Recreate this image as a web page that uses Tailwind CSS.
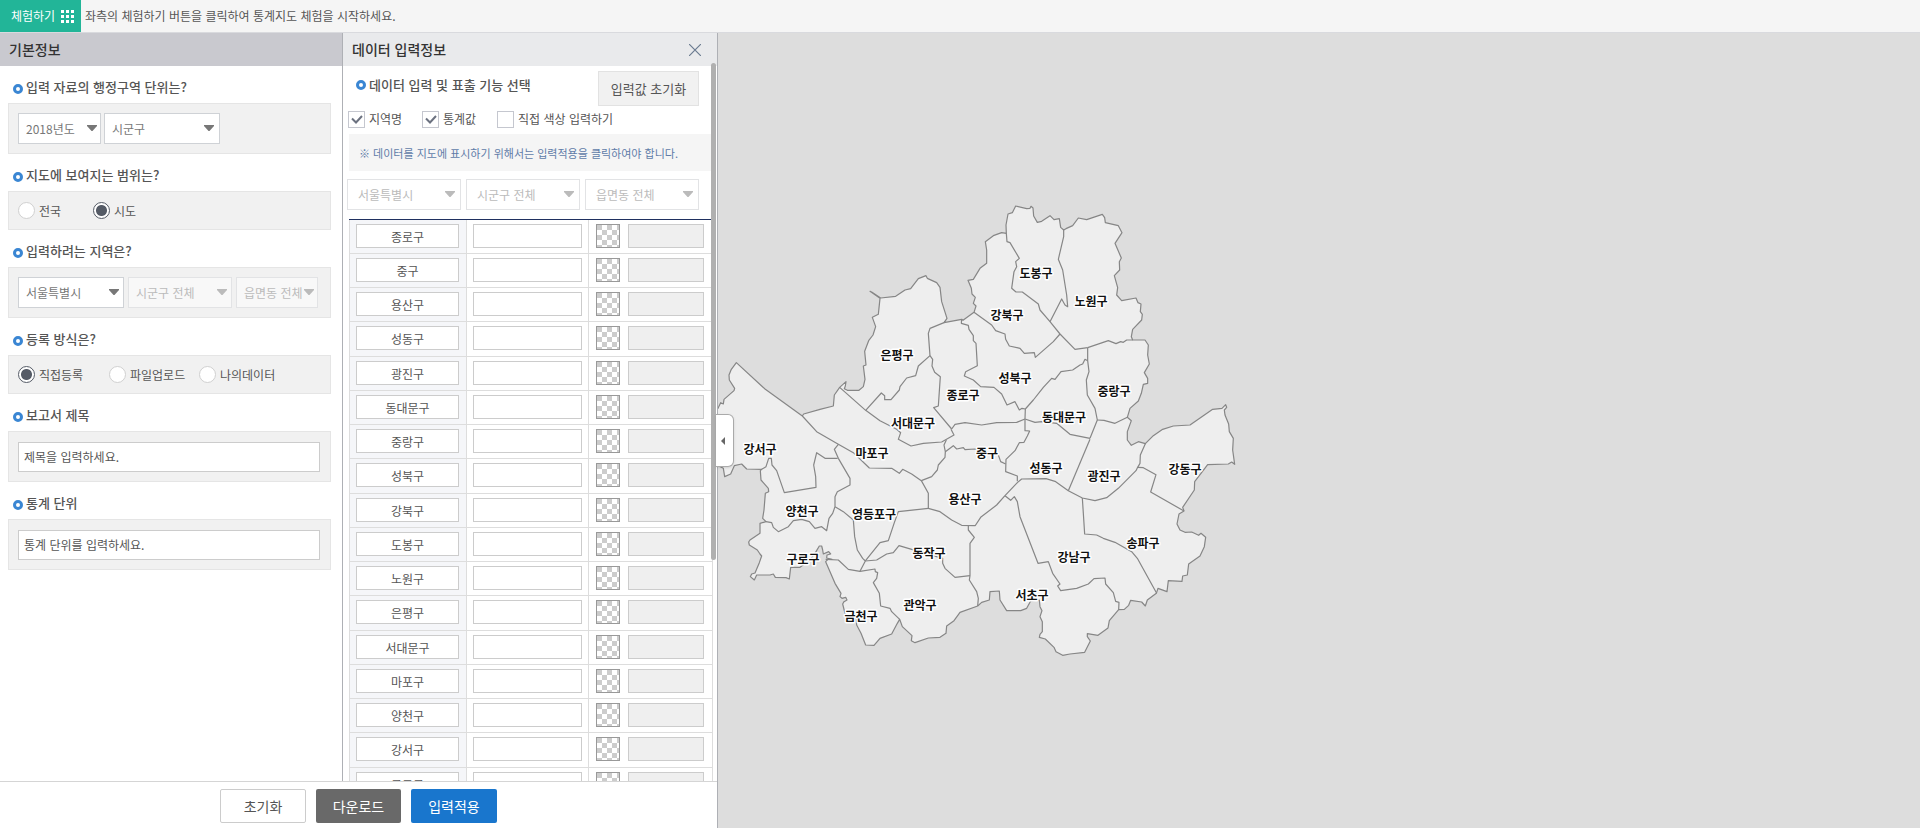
<!DOCTYPE html>
<html lang="ko">
<head>
    <meta charset="UTF-8">
    <meta name="viewport" content="width=device-width, initial-scale=1.0">
    <title>통계지도 체험</title>
    <script src="https://cdn.jsdelivr.net/npm/@tailwindcss/browser@4"></script>
    <style>
        body, input, select, button { font-family: 'Noto Sans CJK KR', 'Liberation Sans', sans-serif; }
    </style>
</head>
<body class="flex h-screen flex-col overflow-hidden bg-white text-xs text-[#555]">

    <!-- 아이콘 -->
    <svg class="hidden">
        <symbol id="bullet" viewBox="0 0 10 10"><circle cx="5" cy="5" r="3.5" fill="#fff" stroke="#3a86d3" stroke-width="3"/></symbol>
        <symbol id="caret" viewBox="0 0 10 6"><path d="M0 0h10v1L5.5 6h-1L0 1z" fill="currentColor"/></symbol>
    </svg>

    <header class="flex h-[33px] shrink-0 items-stretch border-b border-[#d9dade] bg-[#f5f5f5]">
        <button type="button" class="flex w-[81px] items-center justify-between bg-[#22b598] pr-[7px] pl-[11px] text-white">
            체험하기
            <svg class="size-[13px]" viewBox="0 0 13 13" fill="#fff"><path d="M0 0h3v3H0zM5 0h3v3H5zM10 0h3v3h-3zM0 5h3v3H0zM5 5h3v3H5zM10 5h3v3h-3zM0 10h3v3H0zM5 10h3v3H5zM10 10h3v3h-3z"/></svg>
        </button>
        <p class="pl-1 leading-8">좌측의 체험하기 버튼을 클릭하여 통계지도 체험을 시작하세요.</p>
    </header>

    <main class="flex min-h-0 flex-1">
        <div class="flex w-[718px] shrink-0 flex-col border-r border-[#aeb0b5]">
            <div class="flex min-h-0 flex-1">

                <!-- 기본정보 -->
                <section class="w-[343px] shrink-0 border-r border-[#aeb0b5]">
                    <h2 class="h-[33px] bg-[#c9c9cf] pl-[9px] text-sm leading-8 font-medium text-[#333]">기본정보</h2>
                    <form class="pr-[11px] pl-2">
                        <h3 class="flex h-[37px] items-end gap-[3px] pb-[6px] pl-[5px] text-[13px] leading-5 font-medium"><svg class="mb-[3px] size-[10px]"><use href="#bullet"/></svg>입력 자료의 행정구역 단위는?</h3>
                        <div class="flex h-[51px] items-center gap-[3px] border border-[#e5e5e5] bg-[#f1f1f1] px-[9px]">
                            <div class="relative w-[83px] text-[#777]">
                                <select aria-label="연도" class="h-[31px] w-full appearance-none border border-[#cfd2d6] bg-white pl-[7px]"><option>2018년도</option></select>
                                <svg class="pointer-events-none absolute top-3 right-1 h-[6px] w-[10px]"><use href="#caret"/></svg>
                            </div>
                            <div class="relative w-[116px] text-[#777]">
                                <select aria-label="행정구역 단위" class="h-[31px] w-full appearance-none border border-[#cfd2d6] bg-white pl-[7px]"><option>시군구</option></select>
                                <svg class="pointer-events-none absolute top-3 right-[6px] h-[6px] w-[10px]"><use href="#caret"/></svg>
                            </div>
                        </div>

                        <h3 class="flex h-[37px] items-end gap-[3px] pb-[6px] pl-[5px] text-[13px] leading-5 font-medium"><svg class="mb-[3px] size-[10px]"><use href="#bullet"/></svg>지도에 보여지는 범위는?</h3>
                        <div class="flex h-[39px] items-center border border-[#e5e5e5] bg-[#f1f1f1] px-[9px]">
                            <label class="flex w-[75px] items-center gap-1"><input type="radio" name="range" class="size-[17px] appearance-none rounded-full border border-[#d0d0d0] bg-white checked:border-[#555b66] checked:bg-[radial-gradient(circle,#555b66_5px,#fff_6px)]">전국</label>
                            <label class="flex items-center gap-1"><input type="radio" name="range" checked class="size-[17px] appearance-none rounded-full border border-[#d0d0d0] bg-white checked:border-[#555b66] checked:bg-[radial-gradient(circle,#555b66_5px,#fff_6px)]">시도</label>
                        </div>

                        <h3 class="flex h-[37px] items-end gap-[3px] pb-[6px] pl-[5px] text-[13px] leading-5 font-medium"><svg class="mb-[3px] size-[10px]"><use href="#bullet"/></svg>입력하려는 지역은?</h3>
                        <div class="flex h-[51px] items-center gap-1 border border-[#e5e5e5] bg-[#f1f1f1] px-[9px]">
                            <div class="relative w-[106px] text-[#777]">
                                <select aria-label="시도" class="h-[31px] w-full appearance-none border border-[#cfd2d6] bg-white pl-[7px]"><option>서울특별시</option></select>
                                <svg class="pointer-events-none absolute top-3 right-[5px] h-[6px] w-[10px]"><use href="#caret"/></svg>
                            </div>
                            <div class="relative w-[104px] text-[#bbb]">
                                <select aria-label="시군구" disabled class="h-[31px] w-full appearance-none border border-[#e2e3e5] bg-[#f8f8f8] pl-[7px]"><option>시군구 전체</option></select>
                                <svg class="pointer-events-none absolute top-3 right-[5px] h-[6px] w-[10px]"><use href="#caret"/></svg>
                            </div>
                            <div class="relative w-[82px] text-[#bbb]">
                                <select aria-label="읍면동" disabled class="h-[31px] w-full appearance-none border border-[#e2e3e5] bg-[#f8f8f8] pl-[7px]"><option>읍면동 전체</option></select>
                                <svg class="pointer-events-none absolute top-3 right-1 h-[6px] w-[10px]"><use href="#caret"/></svg>
                            </div>
                        </div>

                        <h3 class="flex h-[37px] items-end gap-[3px] pb-[6px] pl-[5px] text-[13px] leading-5 font-medium"><svg class="mb-[3px] size-[10px]"><use href="#bullet"/></svg>등록 방식은?</h3>
                        <div class="flex h-[39px] items-center border border-[#e5e5e5] bg-[#f1f1f1] px-[9px]">
                            <label class="flex w-[91px] items-center gap-1"><input type="radio" name="method" checked class="size-[17px] appearance-none rounded-full border border-[#d0d0d0] bg-white checked:border-[#555b66] checked:bg-[radial-gradient(circle,#555b66_5px,#fff_6px)]">직접등록</label>
                            <label class="flex w-[90px] items-center gap-1"><input type="radio" name="method" class="size-[17px] appearance-none rounded-full border border-[#d0d0d0] bg-white checked:border-[#555b66] checked:bg-[radial-gradient(circle,#555b66_5px,#fff_6px)]">파일업로드</label>
                            <label class="flex items-center gap-1"><input type="radio" name="method" class="size-[17px] appearance-none rounded-full border border-[#d0d0d0] bg-white checked:border-[#555b66] checked:bg-[radial-gradient(circle,#555b66_5px,#fff_6px)]">나의데이터</label>
                        </div>

                        <label for="report-title" class="flex h-[37px] items-end gap-[3px] pb-[6px] pl-[5px] text-[13px] leading-5 font-medium"><svg class="mb-[3px] size-[10px]"><use href="#bullet"/></svg>보고서 제목</label>
                        <div class="flex h-[51px] items-center border border-[#e5e5e5] bg-[#f1f1f1] pr-[10px] pl-[9px]">
                            <input id="report-title" type="text" placeholder="제목을 입력하세요." class="h-[30px] w-full border border-[#ccc] bg-white px-[5px] placeholder:text-[#555]">
                        </div>

                        <label for="stat-unit" class="flex h-[37px] items-end gap-[3px] pb-[6px] pl-[5px] text-[13px] leading-5 font-medium"><svg class="mb-[3px] size-[10px]"><use href="#bullet"/></svg>통계 단위</label>
                        <div class="flex h-[51px] items-center border border-[#e5e5e5] bg-[#f1f1f1] pr-[10px] pl-[9px]">
                            <input id="stat-unit" type="text" placeholder="통계 단위를 입력하세요." class="h-[30px] w-full border border-[#ccc] bg-white px-[5px] placeholder:text-[#555]">
                        </div>
                    </form>
                </section>

                <!-- 데이터 입력정보 -->
                <section class="relative flex min-w-0 flex-1 flex-col">
                    <div class="flex h-[33px] shrink-0 items-center justify-between bg-[#e9eaec] pr-4 pl-[9px]">
                        <h2 class="h-full text-sm leading-8 font-medium text-[#333]">데이터 입력정보</h2>
                        <button type="button" aria-label="닫기"><svg class="size-3" viewBox="0 0 12 12" fill="none" stroke="#6a7b90" stroke-width="1.2"><path d="M0 0l12 12M12 0L0 12"/></svg></button>
                    </div>
                    <div class="min-h-0 flex-1 overflow-hidden pl-1">
                        <div class="flex items-start justify-between pt-[5px] pr-[18px] pl-[9px]">
                            <h3 class="flex items-center gap-[3px] pt-1 text-[13px] leading-5 font-medium"><svg class="size-[10px]"><use href="#bullet"/></svg>데이터 입력 및 표출 기능 선택</h3>
                            <button type="button" class="h-[35px] w-[101px] border border-[#e2e2e2] bg-[#f1f1f1] text-[13px]">입력값 초기화</button>
                        </div>
                        <div class="flex h-7 items-center pb-[2px] pl-[1px]">
                            <label class="flex w-[74px] items-center gap-1"><input type="checkbox" checked class="peer size-[17px] appearance-none border border-[#c5c7cf] bg-white"><svg class="invisible -ml-[18px] mr-[2px] h-[9px] w-3 peer-checked:visible" viewBox="0 0 12 9" fill="none" stroke="#6c7280" stroke-width="2"><path d="M1 3.5l4 4L11 1"/></svg>지역명</label>
                            <label class="flex w-[75px] items-center gap-1"><input type="checkbox" checked class="peer size-[17px] appearance-none border border-[#c5c7cf] bg-white"><svg class="invisible -ml-[18px] mr-[2px] h-[9px] w-3 peer-checked:visible" viewBox="0 0 12 9" fill="none" stroke="#6c7280" stroke-width="2"><path d="M1 3.5l4 4L11 1"/></svg>통계값</label>
                            <label class="flex items-center gap-1"><input type="checkbox" class="size-[17px] appearance-none border border-[#c5c7cf] bg-white">직접 색상 입력하기</label>
                        </div>
                        <p class="mr-1 ml-[2px] h-[37px] bg-[#f5f5f5] pl-[10px] text-[11px] leading-[38px] text-[#5f7ca8]">※ 데이터를 지도에 표시하기 위해서는 입력적용을 클릭하여야 합니다.</p>
                        <div class="flex gap-[5px] pt-2 pb-[9px] text-[#bbb]">
                            <div class="relative w-[114px]">
                                <select aria-label="시도 선택" disabled class="h-[31px] w-full appearance-none border border-[#e2e3e5] bg-white pl-[10px]"><option>서울특별시</option></select>
                                <svg class="pointer-events-none absolute top-3 right-[6px] h-[6px] w-[10px]"><use href="#caret"/></svg>
                            </div>
                            <div class="relative w-[114px]">
                                <select aria-label="시군구 선택" disabled class="h-[31px] w-full appearance-none border border-[#e2e3e5] bg-white pl-[10px]"><option>시군구 전체</option></select>
                                <svg class="pointer-events-none absolute top-3 right-[6px] h-[6px] w-[10px]"><use href="#caret"/></svg>
                            </div>
                            <div class="relative w-[114px]">
                                <select aria-label="읍면동 선택" disabled class="h-[31px] w-full appearance-none border border-[#e2e3e5] bg-white pl-[10px]"><option>읍면동 전체</option></select>
                                <svg class="pointer-events-none absolute top-3 right-[6px] h-[6px] w-[10px]"><use href="#caret"/></svg>
                            </div>
                        </div>
                        <div class="mr-1 ml-[2px] border-t border-[#1f3060]">
                            <table class="w-full table-fixed border-separate border-spacing-0 border-l border-[#ddd]">
                                <colgroup><col class="w-[117px]"><col class="w-[122px]"><col></colgroup>
                                <tbody id="region-rows"></tbody>
                            </table>
                        </div>
                    </div>
                    <div class="absolute top-[30px] right-[1px] h-[497px] w-[5px] rounded-full bg-[#b0b0b0]"></div>
                </section>
            </div>

            <footer class="flex h-[47px] shrink-0 items-center justify-center gap-[10px] border-t border-[#d5d5d5] pt-[2px] text-sm">
                <button type="button" class="h-[34px] w-[86px] rounded-xs border border-[#ccc] bg-white">초기화</button>
                <button type="button" class="h-[34px] w-[85px] rounded-xs bg-[#696969] text-white">다운로드</button>
                <button type="button" class="h-[34px] w-[86px] rounded-xs bg-[#1976cd] text-white">입력적용</button>
            </footer>
        </div>

        <!-- 지도 -->
        <section class="relative min-w-0 flex-1 bg-[#ddd]">
            <svg class="absolute inset-0 size-full" role="img" aria-label="서울특별시 지도">
                <g transform="translate(-8 157) scale(.33333)" fill="none" stroke="#868686" stroke-width="3.6" stroke-linejoin="round">
                    <path fill="#eee" d="M20 660 24 655 32 638 40 642 42 628 72 602 74 595 58 570 57 555 64 538 79 518 165 597 277 678 281 672 330 658 370 648 373 615 389 592 408 575 406 588 403 596 412 601 447 601 460 590 465 568 460 528 468 525 464 484 476 452 489 435 497 410 487 382 505 373 510 325 480 304 485 306 512 324 557 319 585 300 602 296 625 266 648 257 652 265 680 278 690 292 695 335 711 385 702 398 755 388 759 391 792 367 798 348 790 340 796 322 786 312 784 295 774 271 790 268 810 235 830 220 830 180 826 155 850 137 875 128 889 130 888 105 894 72 907 68 917 48 950 56 960 55 963 49 969 54 971 78 982 97 995 94 1020 77 1032 89 1048 86 1052 112 1061 120 1068 116 1088 107 1105 84 1130 89 1177 73 1184 83 1186 98 1225 107 1236 128 1215 160 1234 204 1228 215 1229 240 1213 257 1223 293 1220 315 1235 332 1278 324 1284 338 1293 342 1291 365 1297 373 1295 390 1268 418 1264 440 1268 450 1305 450 1315 465 1313 495 1318 522 1303 548 1313 565 1313 580 1300 583 1294 610 1285 633 1260 655 1252 682 1264 692 1252 725 1252 750 1264 766 1285 755 1306 761 1330 737 1358 718 1390 708 1440 705 1508 658 1536 655 1547 644 1550 652 1543 660 1545 675 1556 702 1558 725 1570 745 1568 780 1574 823 1565 816 1555 822 1493 824 1454 875 1453 900 1418 952 1422 963 1407 972 1401 1002 1410 1020 1425 1027 1445 1026 1466 1036 1473 1030 1487 1042 1483 1070 1470 1098 1436 1122 1432 1155 1418 1158 1416 1174 1375 1172 1371 1205 1344 1195 1339 1210 1312 1230 1306 1248 1295 1236 1262 1231 1256 1246 1243 1258 1226 1259 1198 1292 1194 1314 1164 1336 1132 1331 1132 1340 1141 1353 1124 1387 1080 1392 1058 1396 1038 1385 1032 1372 1006 1347 988 1342 990 1333 997 1325 997 1295 990 1280 996 1262 990 1250 988 1230 962 1233 950 1255 932 1262 890 1262 870 1230 868 1203 840 1205 838 1230 815 1237 803 1248 750 1267 732 1292 710 1308 708 1330 690 1342 655 1344 615 1358 604 1352 606 1337 577 1310 569 1288 562 1300 545 1332 510 1345 492 1366 467 1365 453 1330 440 1305 438 1280 405 1270 398 1242 402 1235 411 1230 407 1222 396 1225 390 1220 393 1210 375 1180 347 1115 354 1108 366 1108 350 1104 351 1095 362 1092 356 1085 340 1092 338 1080 335 1068 328 1068 318 1085 300 1110 270 1132 242 1132 238 1167 228 1163 196 1162 190 1152 180 1155 140 1155 133 1170 121 1160 125 1152 135 1149 148 1118 155 1098 150 1092 142 1080 118 1065 116 1056 120 1050 150 1030 150 1000 168 995 158 985 162 960 166 910 176 905 175 895 153 870 151 842 155 838 110 837 95 822 73 827 62 852 44 860 40 835 20 825z"/>
                    <!-- 북부 경계 -->
                    <g transform="translate(420 0)">
                        <path d="M282 398 240 415 235 430 240 497 248 508 246 528 254 547 271 560 265 648 251 653 305 717"/>
                        <path d="M335 388 334 400 355 406 357 418 370 437 370 452 378 460 382 527 347 545 343 558 370 570 392 590 432 592 455 612 471 645 495 635 508 660 516 655 526 657"/>
                        <path d="M372 367 425 405 437 422 465 432 467 448 478 468 510 475 523 490 553 488 556 502 610 455 630 432"/>
                        <path d="M469 130 471 155 480 158 508 205 497 215 500 230 492 245 485 295 498 306 517 306 565 342 570 360 600 395 630 432 675 478 713 473"/>
                        <path d="M641 120 641 140 625 208 638 240 650 315 653 350 645 345 635 327 600 395"/>
                        <path d="M713 473 775 452 798 461 812 455 820 457 830 450 848 450"/>
                        <path d="M526 657 550 630 580 592 605 565 615 568 633 545 668 540 690 525 698 522 705 508 713 512"/>
                        <path d="M713 473 713 512 717 545 709 570 712 615 735 655 742 690 720 745"/>
                        <path d="M742 690 762 691 795 700 832 682"/>
                        <path d="M526 657 525 687 555 697 575 695 620 700 660 733 720 745"/>
                        <path d="M305 717 315 703 345 698 395 705 440 698 500 697 525 687"/>
                    </g>
                    <!-- 서부 경계 -->
                    <g transform="translate(0 480)">
                        <path d="M277 198 320 245 385 283 430 308 478 354 545 355 568 370 578 358 605 372 634 392 655 430 655 475 690 485 725 510 755 526 795 527"/>
                        <path d="M634 392 665 380 682 360 685 345 705 322 706 305 702 285 709 270"/>
                        <path d="M389 112 467 181 510 212 560 238 572 248 565 268 603 288 640 280 695 276 732 255 723 238"/>
                        <path d="M467 181 514 129 524 137 524 149 543 149 568 120 570 110 590 84 617 77 625 48 660 17"/>
                        <path d="M706 305 730 287 740 297 760 293 765 299 795 297 865 315 872 335 887 342"/>
                        <path d="M655 475 565 485 553 518 535 572 510 578 466 633"/>
                        <path d="M385 283 373 298 385 325 420 385 420 405 382 425 375 440 375 470"/>
                        <path d="M155 358 168 350 176 325 184 325 186 345 200 362 223 428 318 412 317 380 311 345 320 308 345 325 383 325"/>
                        <path d="M168 515 185 518 190 532 205 545 235 530 250 512 275 508 298 515 315 535 335 530 350 542 357 505 368 490 375 470"/>
                        <path d="M375 470 400 485 430 510 434 560 442 600 458 625 466 633 450 664"/>
                        <path d="M347 628 385 630 415 658 450 664 495 657 496 665 503 668 500 685 490 698 508 730 512 768 540 775 545 785 569 808"/>
                        <path d="M466 633 500 630 530 612 550 608 567 587 605 598 698 625 698 640 705 655 735 682 780 677"/>
                        <path d="M775 527 775 540 793 562 780 580 780 677 778 690 800 725 805 745 803 768"/>
                    </g>
                    <!-- 남동부 경계 -->
                    <g transform="translate(750 630)">
                        <path d="M195 58 195 92 209 93 202 108 192 127 178 128 165 152 138 178 137 215 172 228 172 244"/>
                        <path d="M45 378 62 352 110 315 135 287 172 248 185 237 258 236 285 244 325 272 367 294 405 302 440 293 475 265 528 212 533 202 540 190 541 165 556 131"/>
                        <path d="M135 287 152 301 163 290 172 305 180 350 234 490 265 485 278 520 300 552 293 558 302 572 350 565 385 552 402 536 435 534 437 552 460 578 467 604 477 607 476 629"/>
                        <path d="M367 294 370 340 374 402 410 405 430 415 465 427 515 455 532 475 590 580"/>
                        <path d="M533 202 550 203 588 224 572 276 672 333"/>
                        <path d="M390 118 325 272"/>
                    </g>
                </g>
                <g transform="translate(-718 -28)" class="text-xs font-bold" fill="#111" stroke="#fff" stroke-width="3" stroke-linejoin="round" paint-order="stroke" text-anchor="middle">
                    <text x="1036" y="273">도봉구</text>
                    <text x="1091" y="301">노원구</text>
                    <text x="1007" y="315">강북구</text>
                    <text x="897" y="355">은평구</text>
                    <text x="1015" y="378">성북구</text>
                    <text x="1114" y="391">중랑구</text>
                    <text x="963" y="395">종로구</text>
                    <text x="1064" y="417">동대문구</text>
                    <text x="913" y="423">서대문구</text>
                    <text x="760" y="449">강서구</text>
                    <text x="872" y="453">마포구</text>
                    <text x="987" y="453">중구</text>
                    <text x="1046" y="468">성동구</text>
                    <text x="1185" y="469">강동구</text>
                    <text x="1104" y="476">광진구</text>
                    <text x="965" y="499">용산구</text>
                    <text x="802" y="511">양천구</text>
                    <text x="874" y="514">영등포구</text>
                    <text x="1143" y="543">송파구</text>
                    <text x="929" y="553">동작구</text>
                    <text x="1074" y="557">강남구</text>
                    <text x="803" y="559">구로구</text>
                    <text x="1032" y="595">서초구</text>
                    <text x="920" y="605">관악구</text>
                    <text x="861" y="616">금천구</text>
                </g>
            </svg>
            <button type="button" aria-label="패널 접기" class="absolute top-[381px] -left-[2px] flex h-[53px] w-[18px] items-center justify-center rounded-r-md border border-l-0 border-[#aaa] bg-white pr-[3px] shadow-sm">
                <svg class="h-2 w-1" viewBox="0 0 4 8" fill="#666"><path d="M4 0v8L0 4z"/></svg>
            </button>
        </section>
    </main>

    <script>
        const regions = ['종로구', '중구', '용산구', '성동구', '광진구', '동대문구', '중랑구', '성북구', '강북구', '도봉구', '노원구', '은평구', '서대문구', '마포구', '양천구', '강서구', '구로구', '금천구', '영등포구', '동작구', '관악구', '서초구', '강남구', '송파구', '강동구'];

        document.getElementById('region-rows').innerHTML = regions.map(name => `
            <tr class="h-[34px] nth-[4n]:h-[35px]">
                <td class="border-r border-b border-[#ddd] bg-[#f5f6f9] pr-[7px] pl-[6px] align-top pt-1"><input type="text" value="${name}" aria-label="지역명" class="block h-6 w-full border border-[#ccc] bg-white text-center"></td>
                <td class="border-r border-b border-[#ddd] px-[6px] align-top pt-1"><input type="text" aria-label="${name} 통계값" class="block h-6 w-full border border-[#ccc] bg-white px-1"></td>
                <td class="border-r border-b border-[#ddd] pr-2 pl-[7px] align-top pt-1">
                    <div class="flex gap-2">
                        <button type="button" aria-label="${name} 색상 선택" class="size-6 shrink-0 border border-[#999] bg-[repeating-conic-gradient(#fff_0_25%,#ccc_0_50%)] bg-size-[10px_10px]"></button>
                        <input type="text" disabled aria-label="${name} 색상값" class="h-6 w-full min-w-0 border border-[#ccc] bg-[#efefef]">
                    </div>
                </td>
            </tr>`).join('');
    </script>
</body>
</html>
